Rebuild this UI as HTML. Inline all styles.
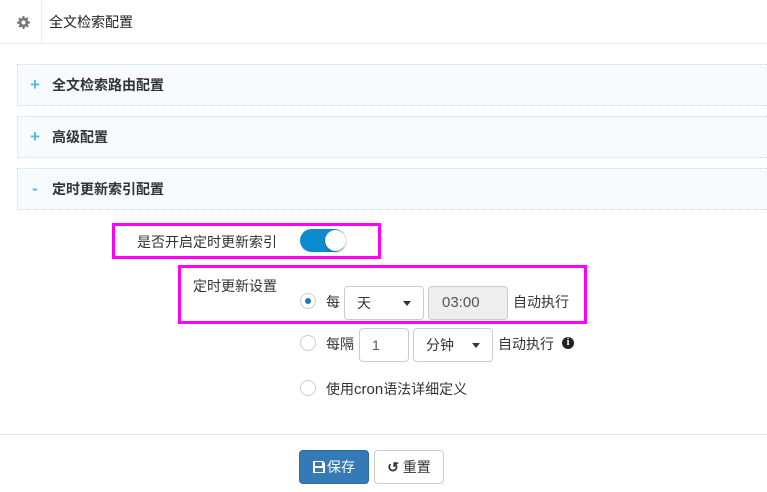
<!DOCTYPE html>
<html><head><meta charset="utf-8"><style>
*{box-sizing:border-box;margin:0;padding:0}
body{width:767px;height:492px;overflow:hidden;background:#fff;font-family:"Liberation Sans","Noto Sans CJK SC",sans-serif;font-size:14px;color:#333;position:relative}
.a{position:absolute}
.panel{position:absolute;left:17px;width:760px;height:42px;border:1px dotted #c9dbe8;background:#f7fbfe;font-weight:bold;font-size:14px;line-height:40px}
.panel span{color:#55b8f0;display:inline-block;width:34px;text-align:center;font-weight:bold;font-size:17px}
.pink{position:absolute;border:3px solid #f0f;}
.sel{position:absolute;height:34px;border:1px solid #ccc;border-radius:4px;background:#fff;line-height:32px;padding-left:12px;font-size:14px}
.sel:after{content:"";position:absolute;right:12px;top:14px;border-left:4px solid transparent;border-right:4px solid transparent;border-top:5px solid #333}
.radio{position:absolute;width:16px;height:16px;border:1px solid #ccc;border-radius:50%;background:#fff}
.btn{position:absolute;height:34px;border-radius:4px;line-height:32px;text-align:center;font-size:14px}
</style></head><body>
<div class="a" style="left:0;top:0;width:767px;height:44px;border-bottom:1px solid #eaeaea"></div>
<div class="a" style="left:41px;top:0;width:1px;height:43px;background:#eee"></div>
<svg class="a" style="left:17px;top:16px" width="13" height="13" viewBox="0 0 16 16"><path fill="#777" d="M7 0h2l.4 2.2 1.5.6 1.8-1.3 1.4 1.4-1.3 1.8.6 1.5L16 7v2l-2.2.4-.6 1.5 1.3 1.8-1.4 1.4-1.8-1.3-1.5.6L9 16H7l-.4-2.2-1.5-.6-1.8 1.3-1.4-1.4 1.3-1.8-.6-1.5L0 9V7l2.2-.4.6-1.5-1.3-1.8 1.4-1.4 1.8 1.3 1.5-.6z M8 5.5a2.5 2.5 0 1 0 0 5a2.5 2.5 0 1 0 0-5z" fill-rule="evenodd"/></svg>
<div class="a" style="left:49px;top:12px;font-size:14px;color:#222">全文检索配置</div>
<div class="panel" style="top:64px"><span>+</span>全文检索路由配置</div>
<div class="panel" style="top:116px"><span>+</span>高级配置</div>
<div class="panel" style="top:168px"><span>-</span>定时更新索引配置</div>
<div class="pink" style="left:112px;top:223px;width:269px;height:36px"></div>
<div class="a" style="left:137px;top:232px">是否开启定时更新索引</div>
<div class="a" style="left:300px;top:229px;width:46px;height:23px;border-radius:12px;background:#0a8ccf"></div>
<div class="a" style="left:325px;top:230px;width:21px;height:21px;border-radius:50%;background:#fff;box-shadow:0 1px 2px rgba(0,0,0,.3)"></div>
<div class="pink" style="left:178px;top:265px;width:409px;height:59px"></div>
<div class="a" style="left:193px;top:276px">定时更新设置</div>
<div class="radio" style="left:300px;top:293px"><div class="a" style="left:4px;top:4px;width:6px;height:6px;border-radius:50%;background:#1a7bb9"></div></div>
<div class="a" style="left:326px;top:292px">每</div>
<div class="sel" style="left:344px;top:286px;width:80px">天</div>
<div class="a" style="left:428px;top:286px;width:80px;height:34px;border:1px solid #ccc;border-radius:4px;background:#eee;line-height:32px;padding-left:13px;color:#555;font-size:15px">03:00</div>
<div class="a" style="left:513px;top:292px">自动执行</div>
<div class="radio" style="left:300px;top:335px"></div>
<div class="a" style="left:326px;top:334px">每隔</div>
<div class="a" style="left:359px;top:328px;width:50px;height:34px;border:1px solid #ccc;border-radius:4px;line-height:32px;padding-left:12px;color:#555">1</div>
<div class="sel" style="left:413px;top:328px;width:80px">分钟</div>
<div class="a" style="left:498px;top:334px">自动执行</div>
<div class="a" style="left:562px;top:337px;width:12px;height:12px;border-radius:50%;background:#222;color:#fff;font-size:10px;line-height:12px;text-align:center;font-weight:bold;font-family:'Liberation Serif',serif">i</div>
<div class="radio" style="left:300px;top:380px"></div>
<div class="a" style="left:326px;top:379px">使用<span style="font-size:15px">cron</span>语法详细定义</div>
<div class="a" style="left:0;top:434px;width:767px;height:1px;background:#e5e5e5"></div>
<div class="btn" style="left:299px;top:450px;width:70px;background:#337ab7;border:1px solid #2e6da4;color:#fff"><svg width="12" height="12" viewBox="0 0 12 12" style="vertical-align:-1px;margin-right:2px"><path fill="#fff" d="M0 0h10l2 2v10H0z M2 1v4h7V1z M2 7v4h8V7z" fill-rule="evenodd"/></svg>保存</div>
<div class="btn" style="left:374px;top:450px;width:70px;background:#fff;border:1px solid #ccc;color:#333"><span style="font-weight:bold">↺</span> 重置</div>
</body></html>
